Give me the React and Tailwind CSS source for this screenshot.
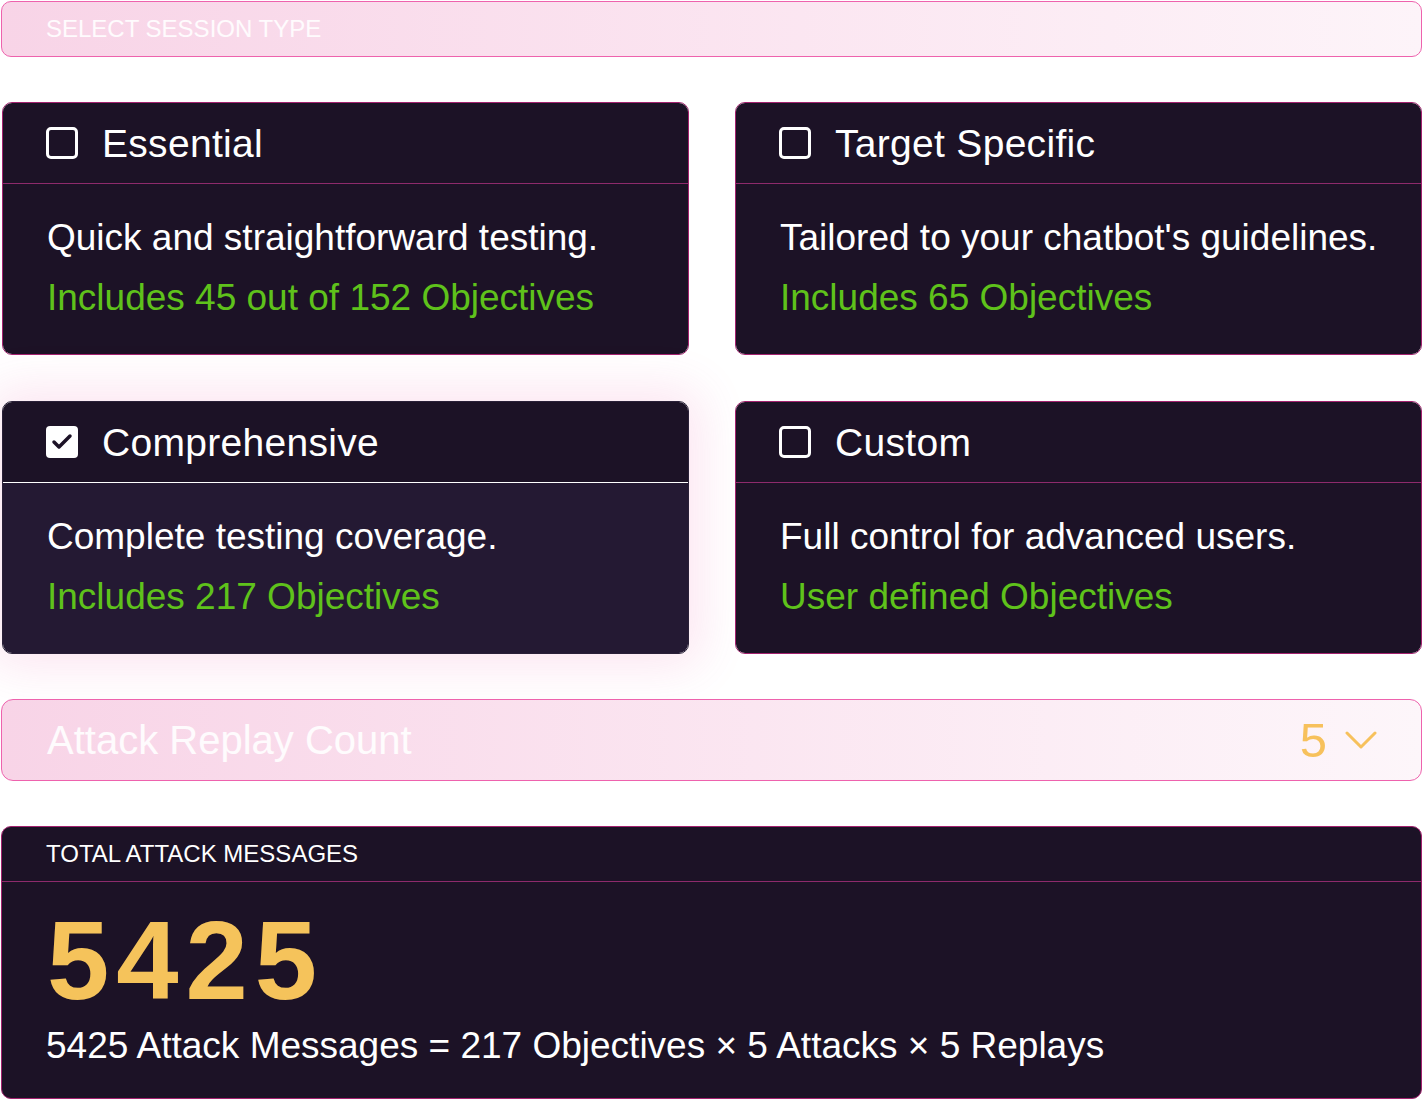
import { Check } from 'lucide-react';

const sessions = [
  { title: 'Essential', text: 'Quick and straightforward testing.', note: 'Includes 45 out of 152 Objectives', checked: false },
  { title: 'Target Specific', text: "Tailored to your chatbot's guidelines.", note: 'Includes 65 Objectives', checked: false },
  { title: 'Comprehensive', text: 'Complete testing coverage.', note: 'Includes 217 Objectives', checked: true },
  { title: 'Custom', text: 'Full control for advanced users.', note: 'User defined Objectives', checked: false },
];

function Checkbox({ checked }) {
  if (checked) {
    return (
      <span className="w-[32px] h-[32px] rounded-[4px] bg-white flex items-center justify-center flex-shrink-0">
        <Check size={24} strokeWidth={3.5} className="text-[#1c1226]" />
      </span>
    );
  }
  return <span className="w-[32px] h-[32px] rounded-[5px] border-[3px] border-white flex-shrink-0" />;
}

function SessionCard({ session }) {
  const { title, text, note, checked } = session;
  return (
    <div
      className={`rounded-[10px] overflow-hidden border ${
        checked
          ? 'border-[#2a2038] shadow-[0_0_48px_12px_rgba(236,72,153,0.14)]'
          : 'border-[#a3226f]'
      }`}
    >
      <div className={`h-[81px] flex items-center gap-[24px] pl-[43px] bg-[#1c1226] border-b ${checked ? 'border-white' : 'border-[#8e2a6c]'}`}>
        <Checkbox checked={checked} />
        <span className="text-[39px] text-white leading-none tracking-[0.3px]">{title}</span>
      </div>
      <div className={`pl-[44px] pt-[24px] pb-[26px] text-[37px] leading-[60px] ${checked ? 'bg-[#241933]' : 'bg-[#1c1226]'}`}>
        <p className="text-white">{text}</p>
        <p className="text-[#5fc21b]">{note}</p>
      </div>
    </div>
  );
}

export default function App() {
  return (
    <div className="w-[1423px] h-[1100px] bg-white font-['Liberation_Sans',Arial,sans-serif] pt-[1px] px-[1px] flex flex-col">
      {/* Section label */}
      <div className="h-[56px] rounded-[10px] border border-[#ee62ad] bg-gradient-to-r from-[#f8d4e7] to-[#fdf4f9] flex items-center pl-[44px]">
        <span className="text-[24px] text-white/90 uppercase">Select Session Type</span>
      </div>

      {/* Session types */}
      <div className="grid grid-cols-2 gap-x-[46px] gap-y-[46px] mt-[45px] pl-[1px]">
        {sessions.map((s) => (
          <SessionCard key={s.title} session={s} />
        ))}
      </div>

      {/* Replay count */}
      <div className="h-[82px] mt-[45px] rounded-[12px] border border-[#ee62ad] bg-gradient-to-r from-[#f8d4e7] to-[#fdf6fa] flex items-center justify-between pl-[45px] pr-[44px]">
        <span className="text-[40px] text-white/90 leading-none">Attack Replay Count</span>
        <div className="flex items-center gap-[18px] text-[#f7c15c]">
          <span className="text-[49px] leading-none">5</span>
          <svg width="32" height="19" viewBox="0 0 32 19" fill="none" stroke="currentColor" strokeWidth="3" strokeLinecap="round" strokeLinejoin="round">
            <polyline points="2,2 16,16 30,2" />
          </svg>
        </div>
      </div>

      {/* Total */}
      <div className="mt-[45px] rounded-[10px] overflow-hidden border border-[#a3226f] bg-[#1c1226]">
        <div className="h-[55px] flex items-center pl-[44px] border-b border-[#8e2a6c]">
          <span className="text-[24px] text-white uppercase">Total Attack Messages</span>
        </div>
        <div className="pl-[45px] pt-[23px] pb-[30px]">
          <p className="text-[112px] leading-[112px] font-semibold text-[#f5c35b] tracking-[7px]">5425</p>
          <p className="text-[37px] leading-[44px] text-white mt-[7px] -ml-[1px]">
            5425 Attack Messages = 217 Objectives × 5 Attacks × 5 Replays
          </p>
        </div>
      </div>
    </div>
  );
}
